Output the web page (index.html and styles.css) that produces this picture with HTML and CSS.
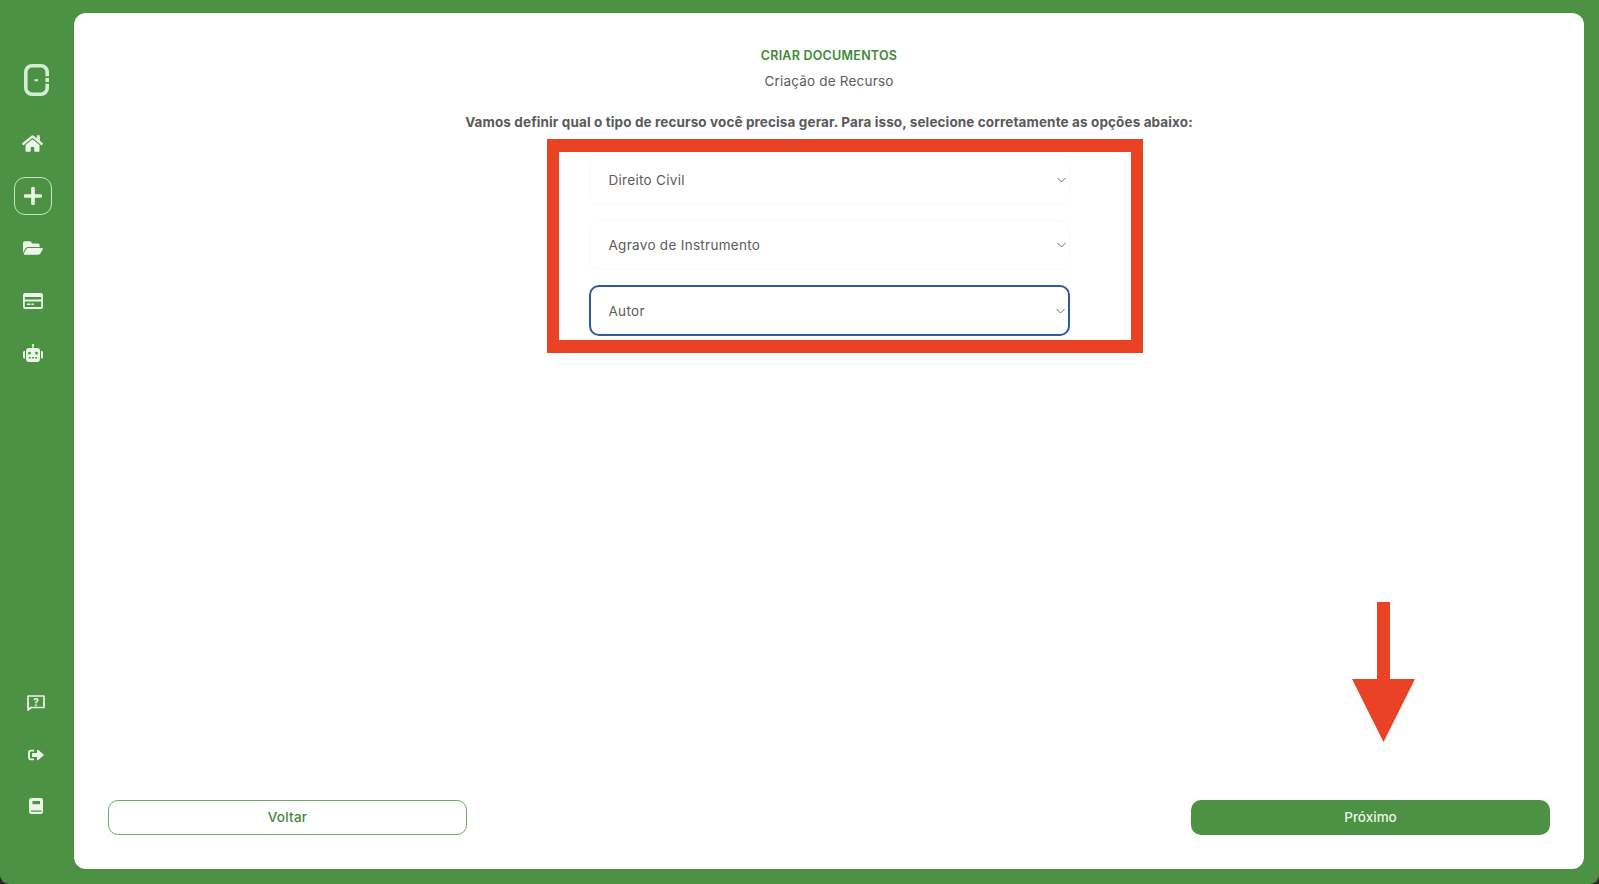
FILE: index.html
```html
<!DOCTYPE html>
<html lang="en">
<head>
  <meta charset="UTF-8">
  <title>Criar Documentos</title>
  <link rel="stylesheet" href="styles.css">
</head>
<body>
  <div class="app">
    <aside class="sidebar">
      <div class="logo">
        <svg width="25" height="32" viewBox="0 0 25 32" fill="none">
          <path d="M8 1.800h9a6.200 6.200 0 0 1 6.200 6.200v4.200M23.200 14v4M23.200 19.800V24a6.200 6.200 0 0 1-6.200 6.200H8A6.200 6.200 0 0 1 1.800 24V8A6.200 6.200 0 0 1 8 1.800" stroke="#d5eed0" stroke-width="3.600"/>
          <rect x="10.500" y="15.200" width="3.500" height="2" fill="#d5eed0"/>
        </svg>
      </div>
      <nav class="nav-top">
        <a class="nav-item" href="#">
          <svg width="21" height="19" viewBox="0 0 576 512"><path d="M280.37 148.26L96 300.11V464a16 16 0 0 0 16 16l112.06-.29a16 16 0 0 0 15.92-16V368a16 16 0 0 1 16-16h64a16 16 0 0 1 16 16v95.64a16 16 0 0 0 16 16.05L464 480a16 16 0 0 0 16-16V300L295.67 148.26a12.19 12.19 0 0 0-15.3 0zM571.6 251.47L488 182.56V44.05a12 12 0 0 0-12-12h-56a12 12 0 0 0-12 12v72.61L318.47 43a48 48 0 0 0-61 0L4.34 251.47a12 12 0 0 0-1.6 16.9l25.5 31A12 12 0 0 0 45.15 301l235.22-193.74a12.19 12.19 0 0 1 15.3 0L530.9 301a12 12 0 0 0 16.9-1.6l25.5-31a12 12 0 0 0-1.7-16.93z"/></svg>
        </a>
        <a class="nav-item" href="#">
          <span class="nav-active">
            <svg width="18" height="18" viewBox="0 0 18 18"><path d="M7.2 1.5a1.8 1.8 0 0 1 3.6 0v5.7h5.7a1.8 1.8 0 0 1 0 3.6h-5.7v5.7a1.8 1.8 0 0 1-3.6 0v-5.7H1.5a1.8 1.8 0 0 1 0-3.6h5.7z"/></svg>
          </span>
        </a>
        <a class="nav-item" href="#">
          <svg width="20" height="18" viewBox="0 0 576 512"><path d="M572.694 292.093L500.27 416.248A63.997 63.997 0 0 1 444.989 448H45.025c-18.523 0-30.064-20.093-20.731-36.093l72.424-124.155A64 64 0 0 1 152 256h399.964c18.523 0 30.064 20.093 20.73 36.093zM152 224h328v-48c0-26.51-21.49-48-48-48H272l-64-64H48C21.49 64 0 85.49 0 112v278.046l69.077-118.418C86.214 242.25 117.989 224 152 224z"/></svg>
        </a>
        <a class="nav-item" href="#">
          <svg width="20" height="16" viewBox="0 0 20 16"><path fill-rule="evenodd" d="M2 0h16a2 2 0 0 1 2 2v12a2 2 0 0 1-2 2H2a2 2 0 0 1-2-2V2a2 2 0 0 1 2-2zM1.800 4v2.400h16.400V4zM1.800 8.600V14h16.400V8.600zM4 10.600h3.400v1.400H4zM8.400 10.600h2.400v1.400H8.400z"/></svg>
        </a>
        <a class="nav-item" href="#">
          <svg width="20" height="18" viewBox="0 0 20 18"><path fill-rule="evenodd" d="M10 0a1.200 1.200 0 0 1 .7 2.200V4H14a3 3 0 0 1 3 3v8a3 3 0 0 1-3 3H6a3 3 0 0 1-3-3V7a3 3 0 0 1 3-3h3.300V2.200A1.200 1.200 0 0 1 10 0zM6.500 7.800a1.400 1.400 0 1 0 0 2.800 1.400 1.400 0 0 0 0-2.800zM13.500 7.800a1.400 1.400 0 1 0 0 2.800 1.400 1.400 0 0 0 0-2.800zM6 13v1.400h1.800V13zM9.100 13v1.400h1.800V13zM12.200 13v1.400H14V13z"/><path d="M0 8.500A1.500 1.500 0 0 1 2 7.100v7.300a1.500 1.500 0 0 1-2-1.400zM20 8.500a1.500 1.500 0 0 0-2-1.400v7.300a1.500 1.500 0 0 0 2-1.400z"/></svg>
        </a>
      </nav>
      <nav class="nav-bottom">
        <a class="nav-item" href="#">
          <svg width="18" height="16" viewBox="0 0 18 16" fill="none"><path d="M1 1h16v11.500H4L1 15z" stroke="#eaf7e6" stroke-width="1.700" stroke-linejoin="round"/><text x="9" y="10.500" text-anchor="middle" class="help-mark">?</text></svg>
        </a>
        <a class="nav-item" href="#">
          <svg width="16" height="14" viewBox="0 0 512 512" preserveAspectRatio="none"><path d="M497 273L329 441c-15 15-41 4.500-41-17v-96H152c-13.300 0-24-10.700-24-24v-96c0-13.300 10.700-24 24-24h136V88c0-21.400 25.900-32 41-17l168 168c9.300 9.400 9.300 24.600 0 34zM192 436v-40c0-6.600-5.400-12-12-12H96c-17.700 0-32-14.300-32-32V160c0-17.700 14.300-32 32-32h84c6.600 0 12-5.400 12-12V76c0-6.600-5.400-12-12-12H96c-53 0-96 43-96 96v192c0 53 43 96 96 96h84c6.600 0 12-5.400 12-12z"/></svg>
        </a>
        <a class="nav-item" href="#">
          <svg width="14" height="16" viewBox="0 0 14 16"><path fill-rule="evenodd" d="M2.500 0H12a2 2 0 0 1 2 2v12a2 2 0 0 1-2 2H2.500A2.500 2.500 0 0 1 0 13.500v-11A2.500 2.500 0 0 1 2.500 0zM3.500 3v3.200h7.500V3zM2 12.600v1.200h10.500v-1.200z"/></svg>
        </a>
      </nav>
    </aside>

    <main class="panel">
      <header class="page-head">
        <h1 class="page-title">CRIAR DOCUMENTOS</h1>
        <p class="page-subtitle">Criação de Recurso</p>
        <p class="page-question">Vamos definir qual o tipo de recurso você precisa gerar. Para isso, selecione corretamente as opções abaixo:</p>
      </header>

      <div class="form-fields">
        <div class="select-box">
          <span>Direito Civil</span>
          <svg class="chevron" width="9" height="6" viewBox="0 0 9 6"><path d="M.5 1l4 4 4-4"/></svg>
        </div>
        <div class="select-box">
          <span>Agravo de Instrumento</span>
          <svg class="chevron" width="9" height="6" viewBox="0 0 9 6"><path d="M.5 1l4 4 4-4"/></svg>
        </div>
        <div class="select-box select-focus">
          <span>Autor</span>
          <svg class="chevron" width="9" height="6" viewBox="0 0 9 6"><path d="M.5 1l4 4 4-4"/></svg>
        </div>
      </div>

      <div class="action-buttons">
        <a href="#" class="back-btn">Voltar</a>
        <a href="#" class="next-btn">Próximo</a>
      </div>

      <!-- annotations drawn on top of the screenshot -->
      <div class="mark-box"></div>
      <svg class="mark-arrow" width="63" height="140" viewBox="0 0 63 140"><path d="M25 0h13v77h25L31.500 140 0 77h25z"/></svg>
    </main>
  </div>
</body>
</html>
```

FILE: styles.css
```css
* {
  margin: 0;
  padding: 0;
  box-sizing: border-box;
}

body {
  width: 1599px;
  height: 884px;
  overflow: hidden;
  background-color: #2a2a24;
  font-family: 'Inter', 'Open Sans', sans-serif;
}

.app {
  display: flex;
  height: 884px;
  background-color: #4c9144;
  border-radius: 0 0 9px 9px;
}

.sidebar {
  width: 74px;
  flex-shrink: 0;
  display: flex;
  flex-direction: column;
}

.logo {
  width: 73px;
  height: 44px;
  margin-top: 58px;
  margin-bottom: 15px;
  display: flex;
  align-items: center;
  justify-content: center;
}

.nav-top .nav-item {
  width: 65px;
  height: 52.5px;
}

.nav-bottom {
  margin-top: auto;
  padding-bottom: 54px;
}

.nav-bottom .nav-item {
  width: 72px;
  height: 52px;
}

.nav-bottom .nav-item:last-child {
  height: 49px;
}

.nav-item {
  display: flex;
  align-items: center;
  justify-content: center;
}

.nav-item svg {
  fill: #eaf7e6;
}

.nav-bottom .nav-item svg[fill="none"] {
  fill: none;
}

.help-mark {
  fill: #eaf7e6;
  font-size: 10px;
  font-weight: 700;
  font-family: 'Inter', sans-serif;
}

.nav-active {
  width: 38px;
  height: 38px;
  display: flex;
  align-items: center;
  justify-content: center;
  border: 1px solid #c5e8bf;
  border-radius: 11px;
}

.panel {
  position: relative;
  flex: 1;
  margin: 13px 15px 15px 0;
  padding: 0 34px 34px;
  background-color: #fff;
  border-radius: 12px;
  display: flex;
  flex-direction: column;
}

.page-head {
  text-align: center;
  padding-top: 35px;
}

.page-title {
  font-size: 12.5px;
  line-height: 16px;
  font-weight: 600;
  letter-spacing: 0.25px;
  color: #3f8a37;
}

.page-subtitle {
  margin-top: 9px;
  font-size: 13.5px;
  line-height: 16px;
  letter-spacing: 0.2px;
  color: #5c5c5c;
}

.page-question {
  margin-top: 25px;
  font-size: 13.5px;
  line-height: 16px;
  font-weight: 700;
  letter-spacing: 0.12px;
  color: #5a5a5a;
}

.form-fields {
  width: 481px;
  margin: 25px auto 0;
  display: flex;
  flex-direction: column;
  gap: 15px;
}

.select-box {
  position: relative;
  height: 50px;
  padding: 0 19px;
  display: flex;
  align-items: center;
  font-size: 13.5px;
  letter-spacing: 0.3px;
  color: #5c5c5c;
  border: 1px solid #fafafa;
  border-radius: 10px;
}

.select-focus {
  height: 51px;
  border: 2px solid #2f5a9c;
  padding-left: 18px;
}

.chevron {
  position: absolute;
  right: 3px;
  top: 50%;
  margin-top: -3px;
  fill: none;
  stroke: #666;
  stroke-width: 1;
}

.action-buttons {
  margin-top: auto;
  display: flex;
  justify-content: space-between;
}

.back-btn,
.next-btn {
  width: 359px;
  height: 35px;
  padding-bottom: 2px;
  display: flex;
  align-items: center;
  justify-content: center;
  font-size: 13.5px;
  font-weight: 500;
  text-decoration: none;
  border-radius: 10px;
}

.back-btn {
  color: #47873f;
  letter-spacing: 0.2px;
  border: 1px solid #7ba175;
}

.next-btn {
  color: #eaf7e6;
  background-color: #4c9144;
}

.mark-box {
  position: absolute;
  left: 473px;
  top: 126px;
  width: 596px;
  height: 214px;
  border: solid #e94225;
  border-width: 13px 12px;
}

.mark-arrow {
  position: absolute;
  left: 1278px;
  top: 589px;
  fill: #e94225;
}
```
